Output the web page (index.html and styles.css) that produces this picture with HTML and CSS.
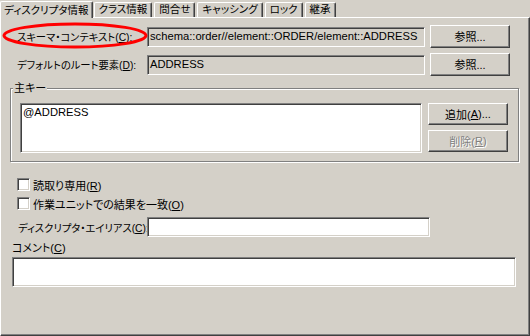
FILE: index.html
```html
<!DOCTYPE html>
<html lang="ja">
<head>
<meta charset="utf-8">
<link rel="stylesheet" href="styles.css">
</head>
<body>
<div class="dialog">
  <div class="tabs">
    <div class="tab active">ディスクリプタ情報</div>
    <div class="tab">クラス情報</div>
    <div class="tab">問合せ</div>
    <div class="tab">キャッシング</div>
    <div class="tab">ロック</div>
    <div class="tab">継承</div>
  </div>
  <div class="panel">
    <div class="row">
      <span class="label">スキーマ・コンテキスト(<u>C</u>):</span>
      <div class="field ro">schema::order//element::ORDER/element::ADDRESS</div>
      <div class="btn">参照...</div>
    </div>
    <div class="row row2">
      <span class="label">デフォルトのルート要素(<u>D</u>):</span>
      <div class="field ro">ADDRESS</div>
      <div class="btn">参照...</div>
    </div>
    <div class="group">
      <span class="legend">主キー</span>
      <div class="group-body">
        <div class="list">@ADDRESS</div>
        <div class="btns">
          <div class="btn small">追加(<u>A</u>)...</div>
          <div class="btn small disabled">削除(<u>R</u>)</div>
        </div>
      </div>
    </div>
    <div class="check first"><span class="box"></span><span>読取り専用(<u>R</u>)</span></div>
    <div class="check"><span class="box"></span><span>作業ユニットでの結果を一致(<u>O</u>)</span></div>
    <div class="row alias">
      <span class="label alias-label">ディスクリプタ・エイリアス(<u>C</u>):</span>
      <div class="field white wide"></div>
    </div>
    <div class="comment-label">コメント(<u>C</u>)</div>
    <div class="field white comment"></div>
  </div>
  <svg class="mark" width="150" height="30" viewBox="0 0 150 30"><ellipse cx="74" cy="13.5" rx="71" ry="11.5" fill="none" stroke="#ff0000" stroke-width="3"/></svg>
</div>
</body>
</html>
```
FILE: styles.css
```css
html, body {
  margin: 0;
  padding: 0;
  background: #d4d0c8;
}
body {
  width: 530px;
  height: 336px;
  overflow: hidden;
  font-family: "Liberation Sans", "Noto Sans CJK JP", sans-serif;
  font-size: 11px;
  color: #000;
  font-feature-settings: "palt";
}
u { text-decoration: underline; text-underline-offset: 1px; }
.dialog {
  position: relative;
  width: 530px;
  height: 336px;
}
.tabs {
  display: flex;
  height: 17px;
  align-items: flex-end;
}
.tab {
  height: 15px;
  box-sizing: border-box;
  border-top: 1px solid #fff;
  border-left: 1px solid #fff;
  border-right: 1px solid #404040;
  box-shadow: inset -1px 0 0 #808080;
  border-radius: 2px 2px 0 0;
  padding: 0 4px 0 4px;
  line-height: 13px;
  font-size: 10.5px;
  margin-left: 2px;
  white-space: nowrap;
}
.tab.active {
  height: 17px;
  margin-left: 0;
  padding: 1px 3px 0 3px;
  line-height: 14px;
  position: relative;
  z-index: 1;
  margin-bottom: -1px;
  background: #d4d0c8;
}
.tab.active + .tab { margin-left: 1px; }
.panel {
  box-sizing: border-box;
  width: 530px;
  height: 319px;
  border-top: 1px solid #fff;
  border-left: 1px solid #fff;
  border-right: 1px solid #404040;
  border-bottom: 1px solid #404040;
  box-shadow: inset -1px -1px 0 #808080;
  padding: 7px 0 0 9px;
  display: flex;
  flex-direction: column;
}
.row {
  display: flex;
  align-items: center;
  height: 23px;
}
.row2 { margin-top: 5px; }
.label {
  width: 130px;
  padding-left: 7px;
  white-space: nowrap;
  font-size: 10.3px;
}
.field {
  box-sizing: border-box;
  height: 20px;
  border-top: 1px solid #808080;
  border-left: 1px solid #808080;
  border-right: 1px solid #fff;
  border-bottom: 1px solid #fff;
  box-shadow: inset 1px 1px 0 #404040, inset -1px -1px 0 #d4d0c8;
  padding: 0 2px;
  line-height: 17px;
  font-size: 11.2px;
  white-space: nowrap;
  overflow: hidden;
}
.field.ro { width: 278px; background: #d4d0c8; }
.field.white { background: #fff; }
.btn {
  box-sizing: border-box;
  width: 80px;
  height: 23px;
  margin-left: 5px;
  border-top: 1px solid #fff;
  border-left: 1px solid #fff;
  border-right: 1px solid #404040;
  border-bottom: 1px solid #404040;
  box-shadow: inset -1px -1px 0 #808080;
  display: flex;
  align-items: center;
  justify-content: center;
  padding-bottom: 1px;
}
.group {
  position: relative;
  margin-top: 12px;
  width: 509px;
  box-sizing: border-box;
  border: 1px solid #808080;
  box-shadow: inset 1px 1px 0 #fff, 1px 1px 0 #fff;
  padding: 14px 0 8px 9px;
}
.legend {
  position: absolute;
  top: -8px;
  left: 2px;
  padding: 0 1px;
  background: #d4d0c8;
  line-height: 14px;
}
.group-body {
  display: flex;
  align-items: flex-start;
}
.list {
  box-sizing: border-box;
  width: 402px;
  height: 50px;
  background: #fff;
  border-top: 1px solid #808080;
  border-left: 1px solid #808080;
  border-right: 1px solid #fff;
  border-bottom: 1px solid #fff;
  box-shadow: inset 1px 1px 0 #404040, inset -1px -1px 0 #d4d0c8;
  padding: 1px 2px;
  line-height: 15px;
  font-size: 11.2px;
}
.btns {
  display: flex;
  flex-direction: column;
  gap: 5px;
  margin-left: 1px;
}
.btn.small { height: 22px; }
.btn.disabled {
  color: #808080;
  text-shadow: 1px 1px 0 #fff;
}
.check {
  display: flex;
  align-items: center;
  height: 19px;
  padding-left: 7px;
}
.check.first { margin-top: 13px; }
.box {
  box-sizing: border-box;
  width: 13px;
  height: 13px;
  background: #fff;
  border-top: 1px solid #808080;
  border-left: 1px solid #808080;
  border-right: 1px solid #fff;
  border-bottom: 1px solid #fff;
  box-shadow: inset 1px 1px 0 #404040, inset -1px -1px 0 #d4d0c8;
  margin-right: 3px;
}
.alias { margin-top: 4px; height: 20px; }
.alias-label { width: 129px; padding-left: 8px; }
.field.wide { width: 283px; }
.comment-label {
  margin-top: 4px;
  margin-left: 2px;
  line-height: 15px;
}
.field.comment {
  margin-top: 1px;
  margin-left: 2px;
  width: 504px;
  height: 30px;
}
.mark {
  position: absolute;
  left: 1px;
  top: 22px;
}
```
